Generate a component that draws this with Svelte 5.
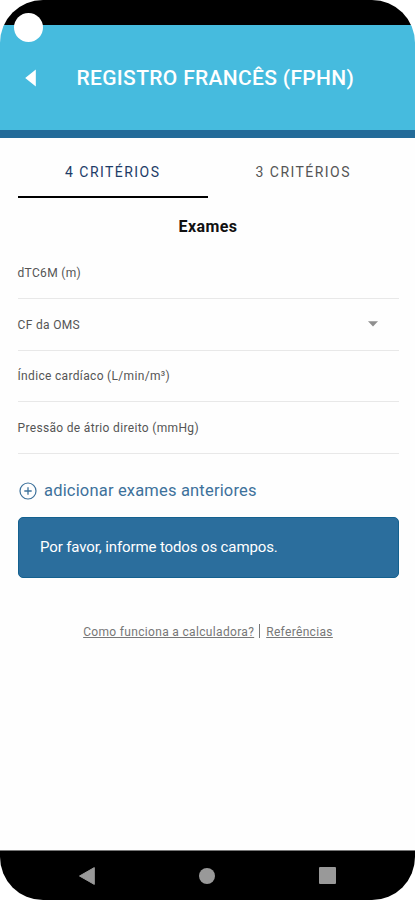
<script lang="ts">
	type Field = { label: string; select?: boolean };

	const tabs = ['4 CRITÉRIOS', '3 CRITÉRIOS'];

	const fields: Field[] = [
		{ label: 'dTC6M (m)' },
		{ label: 'CF da OMS', select: true },
		{ label: 'Índice cardíaco (L/min/m³)' },
		{ label: 'Pressão de átrio direito (mmHg)' }
	];

	let active = $state(0);
</script>

<div class="phone">
	<div class="status-bar"><span class="camera"></span></div>

	<header>
		<svg class="back" width="11" height="18" viewBox="0 0 11 18">
			<path d="M10.8 0.4V17.6L0.2 9Z" fill="#fff" />
		</svg>
		<h1>REGISTRO FRANCÊS (FPHN)</h1>
	</header>

	<main>
		<div class="tabs">
			{#each tabs as tab, i}
				<button class="tab" class:active={active === i} onclick={() => (active = i)}>{tab}</button>
			{/each}
		</div>

		<h2>Exames</h2>

		<div class="fields">
			{#each fields as field}
				<div class="field">
					<span>{field.label}</span>
					{#if field.select}
						<svg width="10" height="6" viewBox="0 0 10 6">
							<path d="M0 0.2H10L5 5.6Z" fill="#8f8f8f" />
						</svg>
					{/if}
				</div>
			{/each}
		</div>

		<div class="add">
			<svg width="18" height="18" viewBox="0 0 18 18" fill="none" stroke="#3d719b">
				<circle cx="9" cy="9" r="8" stroke-width="1.2" />
				<path d="M9 5.3V12.7M5.3 9H12.7" stroke-width="1.3" />
			</svg>
			<span>adicionar exames anteriores</span>
		</div>

		<div class="notice"><span>Por favor, informe todos os campos.</span></div>

		<div class="links">
			<span class="link">Como funciona a calculadora?</span>
			<span class="divider"></span>
			<span class="link">Referências</span>
		</div>
	</main>

	<nav>
		<svg width="16" height="18" viewBox="0 0 16 18">
			<path d="M15.3 0.6V17.4L0.5 9Z" fill="#999" stroke="#999" stroke-linejoin="round" />
		</svg>
		<span class="home"></span>
		<span class="recent"></span>
	</nav>
</div>

<style>
	:global(body) {
		margin: 0;
		background: #fff;
	}

	.phone {
		display: flex;
		flex-direction: column;
		width: 415px;
		height: 900px;
		overflow: hidden;
		border-radius: 43px;
		background: #fefefe;
		font-family: Roboto, sans-serif;
	}

	.status-bar {
		position: relative;
		flex: none;
		height: 25px;
		background: #000;
	}

	.camera {
		position: absolute;
		top: 12.5px;
		left: 13.5px;
		width: 29px;
		height: 29px;
		border-radius: 50%;
		background: #fff;
	}

	header {
		display: flex;
		align-items: center;
		flex: none;
		box-sizing: border-box;
		height: 113px;
		padding-left: 24.5px;
		border-bottom: 8px solid #236b99;
		background: #46bbde;
	}

	.back {
		margin-right: 41px;
	}

	h1 {
		margin: 0;
		color: #fff;
		font-size: 21px;
		font-weight: 500;
		letter-spacing: 0.32px;
		line-height: 24px;
		white-space: nowrap;
	}

	main {
		flex: 1;
		padding: 11px 16.5px 0 17.5px;
	}

	.tabs {
		display: flex;
	}

	.tab {
		flex: 1;
		height: 49px;
		padding: 0 0 2px;
		border: 0;
		border-bottom: 2px solid transparent;
		background: none;
		color: #555;
		font: 400 14px Roboto, sans-serif;
		letter-spacing: 1.45px;
	}

	.tab.active {
		border-bottom-color: #000;
		color: #1d3c68;
	}

	h2 {
		margin: 19px 0 0;
		color: #111;
		font-size: 16px;
		font-weight: 700;
		letter-spacing: 0.4px;
		line-height: 20px;
		text-align: center;
	}

	.fields {
		padding-top: 10px;
	}

	.field {
		display: flex;
		align-items: center;
		justify-content: space-between;
		box-sizing: border-box;
		height: 51.8px;
		padding: 1px 21px 0 0;
		border-bottom: 1.5px solid #e8e8e8;
		color: #555;
		font-size: 12px;
		letter-spacing: 0.33px;
	}

	.field svg {
		margin-bottom: 2px;
	}

	.add {
		display: flex;
		align-items: center;
		gap: 7px;
		height: 20px;
		margin: 27px 0 16px 1.5px;
		color: #3d719b;
		font-size: 16.5px;
		letter-spacing: 0.18px;
	}

	.add span {
		margin-bottom: 1px;
	}

	.notice {
		display: flex;
		align-items: center;
		box-sizing: border-box;
		height: 61px;
		padding-left: 21.5px;
		border: 1px solid #14618f;
		border-radius: 5px;
		background: #2b6e9d;
		color: #fff;
		font-size: 15px;
		letter-spacing: -0.12px;
	}

	.notice span {
		margin-bottom: 1px;
	}

	.links {
		display: flex;
		align-items: center;
		justify-content: center;
		margin-top: 46px;
		color: #777;
		font-size: 12px;
		letter-spacing: 0.33px;
		line-height: 16px;
	}

	.link {
		text-decoration: underline;
	}

	.divider {
		width: 1px;
		height: 14px;
		margin: 0 6px 2px 5px;
		background: #777;
	}

	nav {
		display: flex;
		align-items: center;
		justify-content: space-between;
		flex: none;
		box-sizing: border-box;
		height: 50px;
		padding: 0 79px;
		border-top: 1px solid #777;
		background: #000;
	}

	.home {
		width: 16px;
		height: 16px;
		border-radius: 50%;
		background: #999;
	}

	.recent {
		width: 17px;
		height: 17px;
		border-radius: 1px;
		background: #999;
	}
</style>
